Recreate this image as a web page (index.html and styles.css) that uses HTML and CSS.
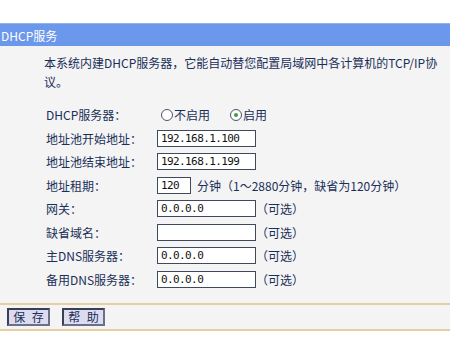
FILE: index.html
```html
<!DOCTYPE html>
<html lang="zh">
<head>
<meta charset="utf-8">
<link rel="stylesheet" href="styles.css">
</head>
<body>
<div class="top"></div>
<div class="title">DHCP服务</div>
<div class="content">
  <p class="desc">本系统内建DHCP服务器，它能自动替您配置局域网中各计算机的TCP/IP协议。</p>
  <div class="form">
    <div class="label">DHCP服务器：</div>
    <div class="field">
      <span class="radio"></span><span class="rtext">不启用</span>
      <span class="radio checked"></span><span class="rtext">启用</span>
    </div>
    <div class="label">地址池开始地址：</div>
    <div class="field"><span class="input">192.168.1.100</span></div>
    <div class="label">地址池结束地址：</div>
    <div class="field"><span class="input">192.168.1.199</span></div>
    <div class="label">地址租期：</div>
    <div class="field"><span class="input short">120</span><span class="note">分钟（1～2880分钟，缺省为120分钟）</span></div>
    <div class="label">网关：</div>
    <div class="field"><span class="input">0.0.0.0</span><span class="opt">（可选）</span></div>
    <div class="label">缺省域名：</div>
    <div class="field"><span class="input"></span><span class="opt">（可选）</span></div>
    <div class="label">主DNS服务器：</div>
    <div class="field"><span class="input">0.0.0.0</span><span class="opt">（可选）</span></div>
    <div class="label">备用DNS服务器：</div>
    <div class="field"><span class="input">0.0.0.0</span><span class="opt">（可选）</span></div>
  </div>
</div>
<div class="bar">
  <span class="btn">保 存</span>
  <span class="btn">帮 助</span>
</div>
</body>
</html>
```
FILE: styles.css
```css
html, body {
  margin: 0;
  padding: 0;
  background: #ffffff;
}
body {
  font-family: "Noto Sans CJK SC", "DejaVu Sans", sans-serif;
  font-size: 12px;
  color: #1a2f58;
  width: 450px;
}
.top {
  height: 23px;
}
.title {
  height: 23px;
  line-height: 23px;
  background: #6c98ec;
  border-top: 1px solid #8fb1f2;
  box-sizing: border-box;
  color: #ffffff;
  padding-left: 1px;
}
.content {
  background: #f4f4f4;
  height: 257px;
  box-sizing: border-box;
  padding-top: 7px;
}
.desc {
  margin: 0 0 0 44px;
  width: 398px;
  line-height: 19px;
}
.form {
  margin-top: 12px;
  display: grid;
  grid-template-columns: 111px 1fr;
  grid-auto-rows: 23.5px;
  padding-left: 46px;
}
.label, .field {
  display: flex;
  align-items: center;
}
.radio {
  width: 10px;
  height: 10px;
  border: 1px solid #4a5468;
  border-radius: 50%;
  background: #ffffff;
  margin-left: 4px;
  margin-right: 1px;
  position: relative;
}
.radio.checked::after {
  content: "";
  position: absolute;
  left: 3px;
  top: 3px;
  width: 4px;
  height: 4px;
  border-radius: 50%;
  background: #3f9c3f;
}
.rtext {
  margin-right: 16px;
}
.input {
  box-sizing: border-box;
  width: 99px;
  height: 17px;
  border: 1px solid #3e4a5c;
  background: #ffffff;
  font-family: "DejaVu Sans Mono", monospace;
  font-size: 11px;
  letter-spacing: -0.6px;
  line-height: 15px;
  padding-left: 3px;
  color: #111111;
}
.input.short {
  width: 34px;
}
.note {
  margin-left: 6px;
}
.bar {
  height: 28px;
  box-sizing: border-box;
  background: #f4f4f4;
  border-top: 2px solid #e6cfa3;
  border-bottom: 2px solid #e6cfa3;
  display: flex;
  align-items: center;
  gap: 12px;
  padding-left: 7px;
}
.btn {
  box-sizing: border-box;
  width: 43px;
  height: 18px;
  line-height: 14px;
  text-align: center;
  background: #dcdcf0;
  border: 2px solid #3a3f55;
  border-right-color: #6b7088;
  border-bottom-color: #6b7088;
  color: #1f2e55;
  font-size: 12px;
  letter-spacing: 2px;
  text-indent: 2px;
}
```
